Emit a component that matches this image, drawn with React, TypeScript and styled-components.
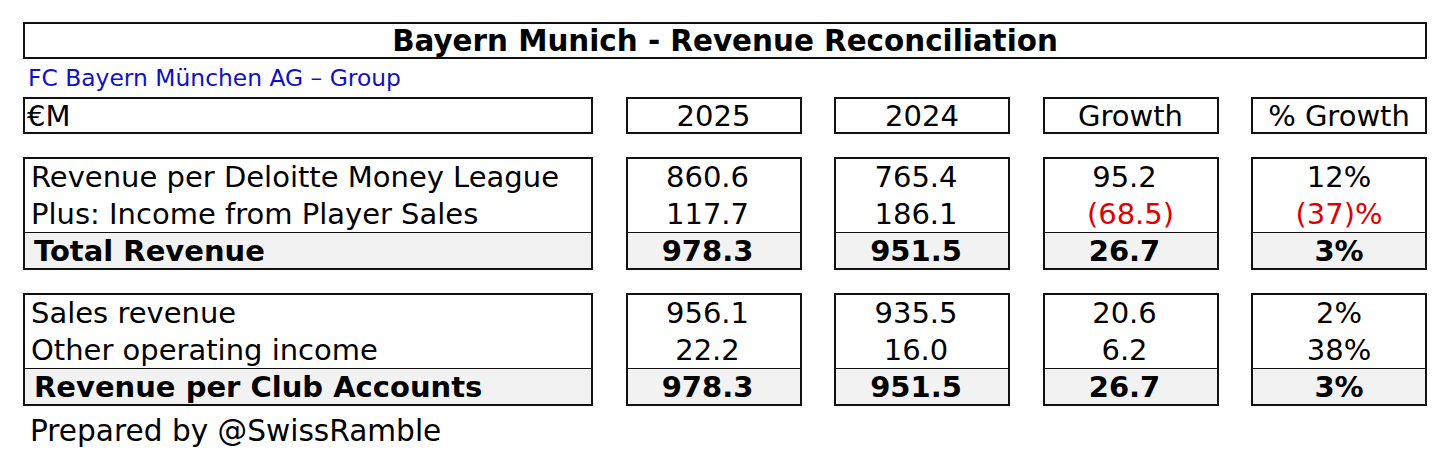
import React from "react";
import styled, { createGlobalStyle } from "styled-components";

const Global = createGlobalStyle`
  html, body { margin: 0; padding: 0; background: #ffffff; }
  body { font-family: "DejaVu Sans", Verdana, sans-serif; color: #000; }
`;

const Page = styled.div`
  width: 1404px;
  padding: 22px 0 0 23px;
  display: flex;
  flex-direction: column;
`;

const TitleBox = styled.div`
  box-sizing: border-box;
  height: 37px;
  border: 2px solid #111;
  display: flex;
  align-items: center;
  justify-content: center;
  font-weight: bold;
  font-size: 29.4px;
`;

const Subtitle = styled.div`
  height: 38px;
  display: flex;
  align-items: center;
  padding-left: 5px;
  color: #1010c8;
  font-size: 23.4px;
`;

const Row = styled.div<{ $mt?: number }>`
  display: grid;
  grid-template-columns: 570px 176px 176px 176px 176px;
  column-gap: 32.5px;
  margin-top: ${(p) => p.$mt ?? 0}px;
`;

const HeadCell = styled.div<{ $left?: boolean }>`
  box-sizing: border-box;
  height: 37px;
  border: 2px solid #111;
  display: flex;
  align-items: center;
  justify-content: ${(p) => (p.$left ? "flex-start" : "center")};
  padding-left: ${(p) => (p.$left ? "2px" : "0")};
  font-size: 29px;
`;

const GroupBox = styled.div`
  box-sizing: border-box;
  border: 2px solid #111;
  display: flex;
  flex-direction: column;
`;

const Line = styled.div<{ $left?: boolean; $pad?: boolean; $red?: boolean }>`
  height: 36.5px;
  display: flex;
  align-items: center;
  justify-content: ${(p) => (p.$left ? "flex-start" : "center")};
  padding-left: ${(p) => (p.$left ? "6px" : "0")};
  padding-right: ${(p) => (p.$pad ? "12px" : "0")};
  font-size: 29px;
  color: ${(p) => (p.$red ? "#e00000" : "#000")};
  white-space: nowrap;
`;

const TotalLine = styled(Line)`
  height: 35px;
  border-top: 1.5px solid #111;
  background: #f2f2f2;
  font-weight: bold;
  padding-left: ${(p) => (p.$left ? "9px" : "0")};
`;

const Footer = styled.div`
  height: 50px;
  display: flex;
  align-items: center;
  padding-left: 7px;
  font-size: 29.6px;
`;

type Cell = { v: string; red?: boolean; pad?: boolean };
type Group = { rows: [string, Cell[]][]; total: [string, Cell[]] };

const n = (v: string): Cell => ({ v, pad: true });
const neg = (v: string): Cell => ({ v, red: true });
const p = (v: string): Cell => ({ v });

const groups: Group[] = [
  {
    rows: [
      ["Revenue per Deloitte Money League", [n("860.6"), n("765.4"), n("95.2"), p("12%")]],
      ["Plus: Income from Player Sales", [n("117.7"), n("186.1"), neg("(68.5)"), neg("(37)%")]],
    ],
    total: ["Total Revenue", [n("978.3"), n("951.5"), n("26.7"), p("3%")]],
  },
  {
    rows: [
      ["Sales revenue", [n("956.1"), n("935.5"), n("20.6"), p("2%")]],
      ["Other operating income", [n("22.2"), n("16.0"), n("6.2"), p("38%")]],
    ],
    total: ["Revenue per Club Accounts", [n("978.3"), n("951.5"), n("26.7"), p("3%")]],
  },
];

const headers = ["2025", "2024", "Growth", "% Growth"];

export default function App() {
  return (
    <>
      <Global />
      <Page>
        <TitleBox>Bayern Munich - Revenue Reconciliation</TitleBox>
        <Subtitle>FC Bayern München AG – Group</Subtitle>
        <Row>
          <HeadCell $left>€M</HeadCell>
          {headers.map((h) => (
            <HeadCell key={h}>{h}</HeadCell>
          ))}
        </Row>
        {groups.map((g, gi) => (
          <Row key={gi} $mt={23}>
            <GroupBox>
              {g.rows.map(([label]) => (
                <Line key={label} $left>{label}</Line>
              ))}
              <TotalLine $left>{g.total[0]}</TotalLine>
            </GroupBox>
            {[0, 1, 2, 3].map((ci) => (
              <GroupBox key={ci}>
                {g.rows.map(([label, cells]) => (
                  <Line key={label} $pad={cells[ci].pad} $red={cells[ci].red}>
                    {cells[ci].v}
                  </Line>
                ))}
                <TotalLine $pad={g.total[1][ci].pad}>{g.total[1][ci].v}</TotalLine>
              </GroupBox>
            ))}
          </Row>
        ))}
        <Footer>Prepared by @SwissRamble</Footer>
      </Page>
    </>
  );
}
